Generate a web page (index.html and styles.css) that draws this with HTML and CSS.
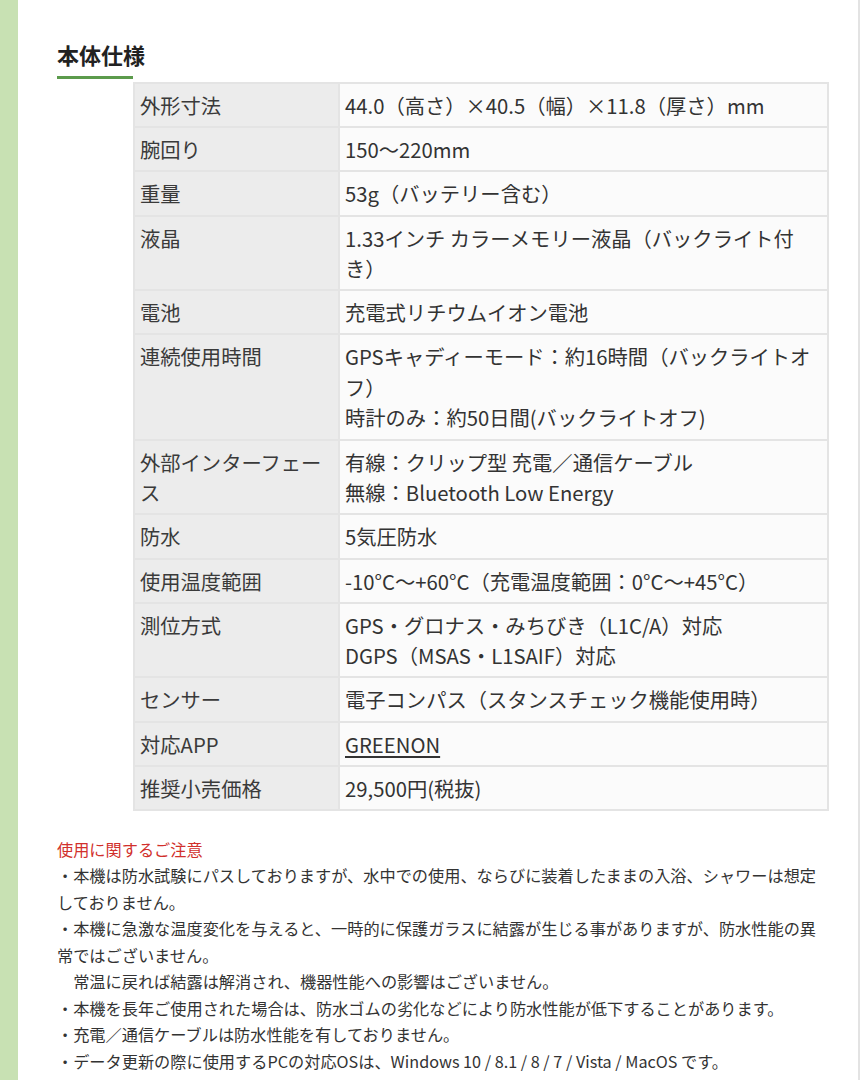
FILE: index.html
```html
<!DOCTYPE html>
<html lang="ja">
<head>
<meta charset="utf-8">
<link rel="stylesheet" href="styles.css">
</head>
<body>
<div class="page">
  <div class="side"></div>
  <main class="content">
    <h2 class="title">本体仕様</h2>
    <table class="spec">
      <tr><th>外形寸法</th><td>44.0（高さ）×40.5（幅）×11.8（厚さ）mm</td></tr>
      <tr><th>腕回り</th><td>150～220mm</td></tr>
      <tr><th>重量</th><td>53g（バッテリー含む）</td></tr>
      <tr><th>液晶</th><td>1.33インチ カラーメモリー液晶（バックライト付き）</td></tr>
      <tr><th>電池</th><td>充電式リチウムイオン電池</td></tr>
      <tr><th>連続使用時間</th><td>GPSキャディーモード：約16時間（バックライトオフ）<br>時計のみ：約50日間(バックライトオフ)</td></tr>
      <tr><th>外部インターフェース</th><td>有線：クリップ型 充電／通信ケーブル<br>無線：Bluetooth Low Energy</td></tr>
      <tr><th>防水</th><td>5気圧防水</td></tr>
      <tr><th>使用温度範囲</th><td>-10°C～+60°C（充電温度範囲：0°C～+45°C）</td></tr>
      <tr><th>測位方式</th><td>GPS・グロナス・みちびき（L1C/A）対応<br>DGPS（MSAS・L1SAIF）対応</td></tr>
      <tr><th>センサー</th><td>電子コンパス（スタンスチェック機能使用時）</td></tr>
      <tr><th>対応APP</th><td><a class="link" href="#">GREENON</a></td></tr>
      <tr><th>推奨小売価格</th><td>29,500円(税抜)</td></tr>
    </table>
    <div class="notes">
      <p class="notes-title">使用に関するご注意</p>
      <p>・本機は防水試験にパスしておりますが、水中での使用、ならびに装着したままの入浴、シャワーは想定しておりません。</p>
      <p>・本機に急激な温度変化を与えると、一時的に保護ガラスに結露が生じる事がありますが、防水性能の異常ではございません。<br>　常温に戻れば結露は解消され、機器性能への影響はございません。</p>
      <p>・本機を長年ご使用された場合は、防水ゴムの劣化などにより防水性能が低下することがあります。</p>
      <p>・充電／通信ケーブルは防水性能を有しておりません。</p>
      <p>・データ更新の際に使用するPCの対応OSは、Windows 10 / 8.1 / 8 / 7 / Vista / MacOS です。</p>
    </div>
  </main>
  <div class="edge"></div>
</div>
</body>
</html>
```

FILE: styles.css
```css
html, body {
  margin: 0;
  padding: 0;
  background: #ffffff;
}
body {
  font-family: "Noto Sans CJK JP", "Noto Sans", sans-serif;
  color: #333333;
}
.page {
  display: flex;
  width: 860px;
  min-height: 1080px;
}
.side {
  width: 18px;
  flex: none;
  background: #c8e1b3;
}
.edge {
  width: 2px;
  flex: none;
  margin-left: auto;
  background: #e3e3e3;
}
.content {
  flex: none;
  width: 772px;
  padding: 38px 0 0 39px;
}
.title {
  margin: 0;
  font-size: 22px;
  font-weight: 700;
  line-height: 32px;
  color: #222222;
}
.title::after {
  content: "";
  display: block;
  width: 76px;
  height: 3px;
  margin-top: 6px;
  background: #5c9b4c;
}
.spec {
  border-collapse: collapse;
  margin: 3px 0 0 76px;
  width: 696px;
  font-size: 20.3px;
  line-height: 30.5px;
}
.spec th, .spec td {
  border: 2px solid #e4e4e4;
  padding: 6px 10px 5.7px 5px;
  text-align: left;
  vertical-align: top;
  font-weight: 400;
}
.spec th {
  width: 190px;
  padding-left: 5px;
  padding-right: 8px;
  background: #ececec;
  color: #3a3a3a;
}
.spec td {
  background: #fbfbfb;
  color: #333333;
}
.link {
  color: #333333;
  text-decoration: underline;
  text-underline-offset: 3px;
}
.notes {
  margin-top: 25px;
  font-size: 16.2px;
  line-height: 26.5px;
  color: #333333;
}
.notes p {
  margin: 0;
}
.notes .notes-title {
  color: #d1302c;
}
```
